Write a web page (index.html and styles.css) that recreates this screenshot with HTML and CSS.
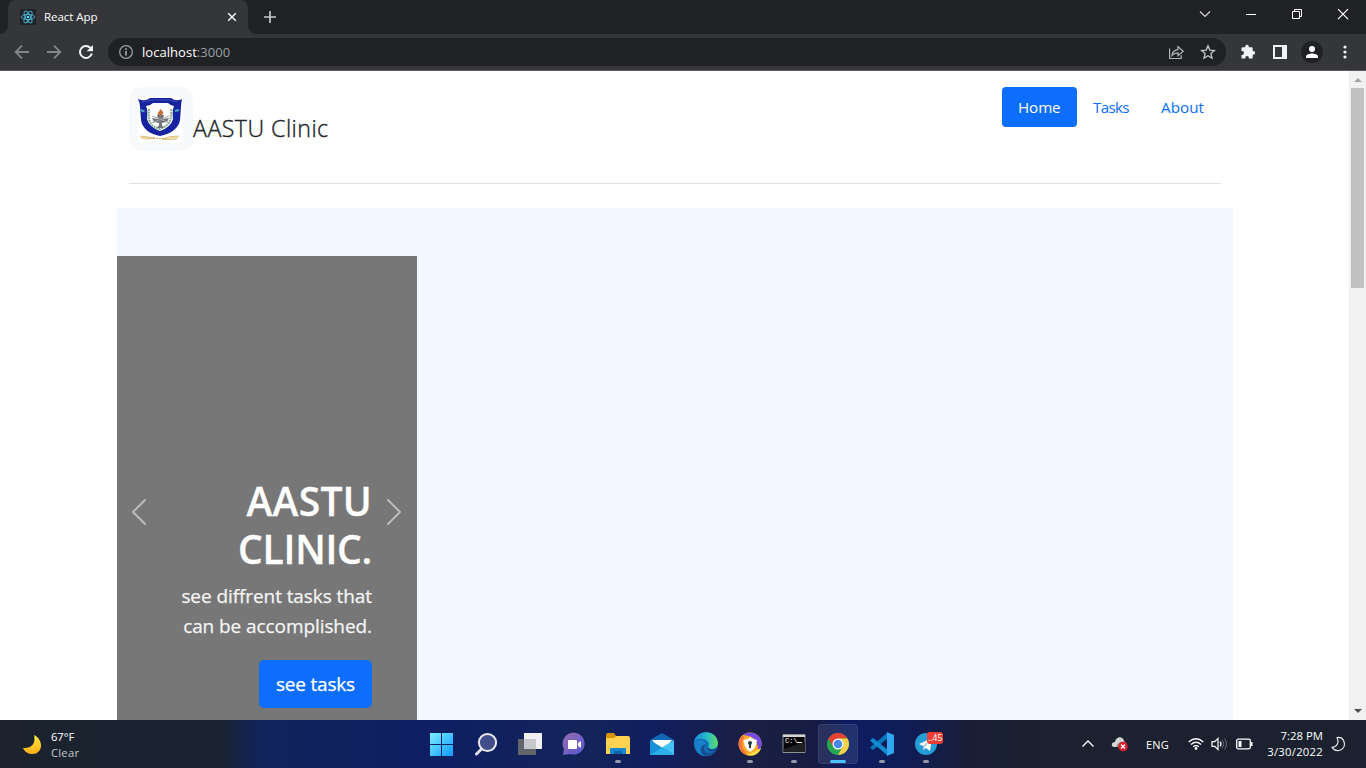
FILE: index.html
```html
<!DOCTYPE html>
<html lang="en">
<head>
<meta charset="utf-8">
<title>React App</title>
<link rel="stylesheet" href="styles.css">
</head>
<body>
<div class="screen">
  <div class="tabstrip">
    <div class="tab">
      <svg class="favicon" width="16" height="16" viewBox="0 0 16 16"><rect width="16" height="16" rx="1.5" fill="#20232a"/><g fill="none" stroke="#4fb3cf" stroke-width=".9"><ellipse cx="8" cy="8" rx="6.6" ry="2.6"/><ellipse cx="8" cy="8" rx="6.6" ry="2.6" transform="rotate(60 8 8)"/><ellipse cx="8" cy="8" rx="6.6" ry="2.6" transform="rotate(120 8 8)"/></g><circle cx="8" cy="8" r="1.3" fill="#61dafb"/></svg>
      <span class="tab-title">React App</span>
      <svg class="tab-close" width="16" height="16" viewBox="0 0 16 16"><path d="M4.2 4.2l7.6 7.6M11.8 4.2l-7.6 7.6" stroke="#f1f3f4" stroke-width="1.5"/></svg>
    </div>
    <svg class="new-tab" width="16" height="16" viewBox="0 0 16 16"><path d="M8 2v12M2 8h12" stroke="#c6c7c9" stroke-width="1.7"/></svg>
    <div class="window-buttons">
      <svg width="46" height="28" viewBox="0 0 46 28"><path d="M18 11.5l5 5 5-5" fill="none" stroke="#dedede" stroke-width="1.1"/></svg>
      <svg width="46" height="28" viewBox="0 0 46 28"><path d="M18 14.5h10" stroke="#fff" stroke-width="1"/></svg>
      <svg width="46" height="28" viewBox="0 0 46 28"><path d="M18.500 11.500h7v7h-7zM20.500 11.500v-2h7v7h-2" fill="none" stroke="#fff"/></svg>
      <svg width="46" height="28" viewBox="0 0 46 28"><path d="M18 9.200l10 10M28 9.200l-10 10" stroke="#fff" stroke-width="1.200"/></svg>
    </div>
  </div>
  <div class="toolbar">
    <svg width="16" height="16" viewBox="0 0 16 16"><path d="M15 8H2M8 1.700L1.700 8 8 14.300" fill="none" stroke="#85868a" stroke-width="1.800"/></svg>
    <svg width="16" height="16" viewBox="0 0 16 16"><path d="M1 8h13M8 1.700L14.300 8 8 14.300" fill="none" stroke="#85868a" stroke-width="1.800"/></svg>
    <svg width="16" height="16" viewBox="0 0 16 16"><path d="M13.800 9.500A6 6 0 1 1 12.300 3.800L13.500 5" fill="none" stroke="#f1f3f4" stroke-width="2"/><path d="M15 1v6.300H8.700z" fill="#f1f3f4"/></svg>
    <div class="omnibox">
      <svg width="16" height="16" viewBox="0 0 16 16"><circle cx="8" cy="8" r="6.300" fill="none" stroke="#9aa0a6" stroke-width="1.300"/><path d="M8 7v4.500M8 4.300V6" stroke="#b4b7ba" stroke-width="1.500"/></svg>
      <span class="url">localhost<span class="port">:3000</span></span>
      <svg class="share" width="17" height="16" viewBox="0 0 17 16"><path d="M1.600 4.500v10h11.600v-3.300M4 11.300c.6-3.700 2.800-5.400 6-5.600V2.600l5.200 4.600-5.200 4.400V8.900c-2.800 0-4.500.7-6 2.400z" fill="none" stroke="#b4b6b9" stroke-width="1.200"/></svg>
      <svg class="star" width="16" height="16" viewBox="0 0 16 16"><path d="M8 1.800l1.800 4.300 4.700.4-3.600 3.100 1.100 4.600L8 11.700l-4 2.500 1.100-4.600-3.600-3.100 4.700-.4z" fill="none" stroke="#c6c8ca" stroke-width="1.300"/></svg>
    </div>
    <svg class="puzzle" width="16" height="16" viewBox="0 0 16 16"><path d="M1.500 4.500q0-1.200 1.200-1.200h2.500V2.500a1.800 1.800 0 0 1 3.600 0v.8h2.700q1.200 0 1.200 1.200v2.600h.6a1.800 1.800 0 0 1 0 3.600h-.6v2.700q0 1.200-1.200 1.200H8.900v-.7a1.800 1.800 0 0 0-3.600 0v.7H2.700q-1.200 0-1.200-1.200v-2.500h.6a1.900 1.900 0 0 0 0-3.800h-.6z" fill="#f1f3f4"/></svg>
    <svg class="side" width="14" height="14" viewBox="0 0 14 14"><path d="M0 0h14v14H0zM2 2v10h7V2z" fill="#f1f3f4" fill-rule="evenodd"/></svg>
    <svg class="profile" width="22" height="22" viewBox="0 0 22 22"><circle cx="11" cy="11" r="11" fill="#202124"/><circle cx="11" cy="8" r="3" fill="#fff"/><path d="M5 17v-1.500c0-2 3.500-3 6-3s6 1 6 3V17z" fill="#fff"/></svg>
    <svg class="dots" width="4" height="14" viewBox="0 0 4 14"><g fill="#f1f3f4"><circle cx="2" cy="2" r="1.600"/><circle cx="2" cy="7" r="1.600"/><circle cx="2" cy="12" r="1.600"/></g></svg>
  </div>
  <div class="viewport">
    <main class="page">
      <header class="site-header">
        <a class="brand">
          <svg width="64" height="64" viewBox="0 0 64 64"><rect width="64" height="64" rx="13" fill="#f8f9fa"/><rect x="9" y="10" width="45" height="45" fill="#fff"/>
            <path d="M9 12q7 3 12-1h21q5 4 11 1-1 4-1 8l-1 13c-1 8-9 14-20 16-11-2-18-8-19-16l-1-13q0-4-2-8z" fill="#1823a0"/>
            <path d="M17 19q4 0 7-3h15q3 3 6 3-2 5-1 13-2 8-13 12-11-4-13-12 1-8-1-13z" fill="#fff"/>
            <path d="M20 22c-1 13 1 17 11 20 10-4 12-10 11-20" fill="none" stroke="#82ab8c" stroke-width="2" stroke-dasharray="2 .7"/><path d="M11.500 23l4 1.500M46 24l4-1" stroke="#51a7c3" stroke-width="2"/><path d="M13 15l6-1 4-1h18l7 2" stroke="#525fc0" stroke-width="1" fill="none" stroke-dasharray="1.500 1"/>
            <path d="M23 31l6 1-1-4h7l-1 4 6-1-2 4-5 1v2l2 3h-7l2-3v-2l-5-1z" fill="#73777c"/><path d="M23 29l18 7M40 29l-17 7" stroke="#a2a8aa" stroke-width="1"/><path d="M29 28c-1-3 2-3 2-6 4 3 4 4 2 6z" fill="#c36d35"/>
            <path d="M11 49q9 1 15 2-7 2-14 0M50 49q-10 0-17 3 9 1 15 0" fill="#f6e2af" stroke="#d5b36d" stroke-width=".8"/><path d="M24 51l13 1" stroke="#d69b61" stroke-dasharray="2 1"/></svg>
          <span class="brand-name">AASTU Clinic</span>
        </a>
        <nav class="nav"><a class="nav-link active">Home</a><a class="nav-link tasks">Tasks</a><a class="nav-link about">About</a></nav>
      </header>
      <section class="hero">
        <div class="carousel">
          <div class="control"><svg width="32" height="32" viewBox="0 0 16 16"><path d="M11 2L5 8l6 6" fill="none" stroke="#bbb" stroke-linecap="round" stroke-linejoin="round"/></svg></div>
          <div class="caption">
            <h1><span class="h-one">AASTU</span><br><span class="h-two">CLINIC.</span></h1>
            <p><span class="p-one">see diffrent tasks that</span><br><span class="p-two">can be accomplished.</span></p>
            <a class="button">see tasks</a>
          </div>
          <div class="control"><svg width="32" height="32" viewBox="0 0 16 16"><path d="M5 2l6 6-6 6" fill="none" stroke="#bbb" stroke-linecap="round" stroke-linejoin="round"/></svg></div>
        </div>
      </section>
    </main>
    <div class="scrollbar">
      <svg width="17" height="17" viewBox="0 0 17 17"><path d="M5 11l4-4 4 4z" fill="#a3a3a3"/></svg>
      <div class="thumb"></div>
      <svg class="down" width="17" height="17" viewBox="0 0 17 17"><path d="M5 6h8l-4 4z" fill="#505050"/></svg>
    </div>
  </div>
  <footer class="taskbar">
    <div class="weather">
      <svg width="20" height="20" viewBox="0 0 20 20"><defs><linearGradient id="moon" x2="0" y2="1"><stop stop-color="#ffed48"/><stop offset="1" stop-color="#ffad12"/></linearGradient></defs><path d="M12 1c10 5 9 18-1 19-5 0-8-2-10-6 9 1 13-5 11-13z" fill="url(#moon)"/></svg>
      <div><div class="temp">67°F</div><div class="cond">Clear</div></div>
    </div>
    <div class="apps">
      <div class="app"><svg width="24" height="24" viewBox="0 0 24 24"><defs><linearGradient id="win" x2="1" y2="1" gradientUnits="userSpaceOnUse" gradientTransform="scale(24)"><stop stop-color="#80f0ff"/><stop offset="1" stop-color="#0b98ff"/></linearGradient></defs><path d="M0 1h11v11H0zM12 1h11v11H12zM0 13h11v11H0zM12 13h11v11H12z" fill="url(#win)"/></svg></div>
      <div class="app"><svg width="24" height="24" viewBox="0 0 24 24"><path d="M8.500 16l-6 6" stroke="#e1e1e5" stroke-width="3" stroke-linecap="round"/><circle cx="13.500" cy="10.500" r="8.600" fill="#414d8d" stroke="#e9e9ec" stroke-width="2"/></svg></div>
      <div class="app"><svg width="24" height="24" viewBox="0 0 24 24"><path d="M0 7h18v16H0z" fill="#62666b"/><path d="M6 1h18v16H6z" fill="#f0f0f2"/><path d="M6 7h12v10H6z" fill="#c7c8cb"/></svg></div>
      <div class="app"><svg width="24" height="24" viewBox="0 0 24 24"><defs><linearGradient id="chat" x2="1" y2="1"><stop stop-color="#9c6bad"/><stop offset="1" stop-color="#5057d2"/></linearGradient></defs><path d="M1 23l1-6A11 11 0 1 1 8 22z" fill="url(#chat)"/><rect x="6" y="8" width="9" height="9" rx="1" fill="#fff"/><path d="M16 11l3-2v7l-3-2z" fill="#fff"/></svg></div>
      <div class="app open"><svg width="24" height="24" viewBox="0 0 24 24"><path d="M0 3q0-2 2-2h6l2 3v4H0z" fill="#d99200"/><path d="M0 6h8l2-2h12q2 0 2 2v16H0z" fill="#ffd252"/><path d="M4 22v-5q0-1 1-1h14q1 0 1 1v5z" fill="#1687d2"/><path d="M8 19h8v3H8z" fill="#0b65a7"/></svg></div>
      <div class="app"><svg width="24" height="24" viewBox="0 0 24 24"><path d="M0 8l12-7 12 7v5H0z" fill="#1267b4"/><path d="M2 8h20l-6 8H8z" fill="#fff"/><path d="M0 8l24 15H0z" fill="#1690d8"/><path d="M24 8v15L12 15.500z" fill="#42c3f4"/><path d="M0 23l12-7.500L24 23z" fill="#2aade8"/></svg></div>
      <div class="app"><svg width="24" height="24" viewBox="0 0 24 24"><defs><linearGradient id="edge"><stop stop-color="#178bd2"/><stop offset=".55" stop-color="#28bdc9"/><stop offset="1" stop-color="#61db61"/></linearGradient></defs><circle cx="12" cy="12" r="12" fill="#126db8"/><path d="M0 10C2-2 22-4 24 11c0 7-9 7-10 4 4-7-8-12-14-5z" fill="url(#edge)"/><path d="M0 11c4-5 12-3 12 1-6 5 2 12 10 6-4 7-14 8-19 2z" fill="#1683ca"/><path d="M12 12c-6 5 2 13 10 6-3 5-9 7-13 5-4-4-3-10 3-11z" fill="#164f93"/><path d="M14 15c1 4 8 4 10 0l-2 3c-5 2-9 0-8-3z" fill="#122359"/></svg></div>
      <div class="app open"><svg width="24" height="24" viewBox="0 0 24 24"><circle cx="12" cy="12" r="11.500" fill="#ffac25"/><path d="M5 3C13-3 24 3 23.500 12c0 3-1 5-3 7-1-8-2-15-15.500-16z" fill="#744de0"/><path d="M5 3C-2 9 0 20 9 23 5 17 2 12 6 6z" fill="#fb7141"/><path d="M9 23c7 2 12-1 14-7-3 2-8 4-14 7z" fill="#ffe048"/><path d="M5.500 8q5-1 6.500-3 2 2 7 3-1 9-7 12-6-4-6.500-12z" fill="#fff"/><circle cx="12" cy="11" r="2" fill="#29394c"/><path d="M11 11h2v5h-2z" fill="#29394c"/></svg></div>
      <div class="app open"><svg width="24" height="24" viewBox="0 0 24 24"><path d="M1 2.500h22v18H1z" fill="#050505" stroke="#8e9094"/><path d="M1 3h22v2H1z" fill="#d4d5d7"/><path d="M1.500 17L23 10v10H1.500z" fill="#202124"/><text x="3" y="11" class="cmd">C:\</text><path d="M15 10.500h5" stroke="#fff"/></svg></div>
      <div class="app open current"><svg width="24" height="24" viewBox="0 0 24 24"><circle cx="12" cy="12" r="11" fill="#26a651"/><path d="M2.500 6.500A11 11 0 0 1 21.500 6.500H12L7.200 14.700z" fill="#e84132"/><path d="M21.500 6.500A11 11 0 0 1 12 23l4.800-8.200V9L12 6.500z" fill="#fcd049"/><circle cx="12" cy="12" r="5.500" fill="#fff"/><circle cx="12" cy="12" r="4.300" fill="#4587ee"/></svg></div>
      <div class="app open"><svg width="24" height="24" viewBox="0 0 24 24"><path d="M18 0v6L3 18l-3-2.500z" fill="#0876ba"/><path d="M18 24v-6L3 6 0 8.500z" fill="#138bd0"/><path d="M17 0l7 3v18l-7 3z" fill="#2fa8ef"/></svg></div>
      <div class="app open telegram"><svg width="24" height="24" viewBox="0 0 24 24"><circle cx="12" cy="12" r="11" fill="#249cd6"/><path d="M5 12l13-6-2 13-4-3-3 2v-4z" fill="#fff"/><path d="M9 14l7-6-5 7-2 3z" fill="#a7c8dc"/></svg><span class="badge">..45</span></div>
    </div>
    <div class="tray">
      <svg class="chevron" width="14" height="10" viewBox="0 0 14 10"><path d="M1.500 7.500L7 2l5.500 5.500" fill="none" stroke="#fff" stroke-width="1.300"/></svg>
      <svg class="cloud" width="18" height="16" viewBox="0 0 18 16"><path d="M5 11H3c-3 0-3-5 1-5 1-6 8-6 9-1l3 3v3z" fill="#d5d5d5"/><path d="M5 11c2-5 6-7 10-3v3z" fill="#96999c"/><circle cx="12" cy="10.500" r="4.800" fill="#d71e2b"/><path d="M10 8.500l4 4m0-4l-4 4" stroke="#fff" stroke-width="1.300"/></svg>
      <span class="lang">ENG</span>
      <svg class="wifi" width="16" height="14" viewBox="0 0 16 14"><g fill="none" stroke="#fff" stroke-width="1.200"><path d="M.7 5Q8-1.500 15.300 5M3 7.500q5-4.500 10 0M5.200 9.800q2.800-2.500 5.600 0"/></g><circle cx="8" cy="11.500" r="1.400" fill="#fff"/></svg>
      <svg class="sound" width="17" height="14" viewBox="0 0 17 14"><path d="M1 4.700h2.700L7 1.500v11L3.700 9.300H1z" fill="none" stroke="#fff" stroke-width="1.200"/><path d="M9 4.700q2 2.300 0 4.600" fill="none" stroke="#fff" stroke-width="1.200"/><path d="M11.300 3q3 4 0 8M13.500 1.500q4 5.500 0 11" fill="none" stroke="#666b75"/></svg>
      <svg class="battery" width="17" height="12" viewBox="0 0 17 12"><rect x=".7" y="1.200" width="13.600" height="9.600" rx="1.500" fill="none" stroke="#fff" stroke-width="1.300"/><path d="M2.500 3h3v6h-3zM15 4h1.500v4H15z" fill="#fff"/></svg>
      <div class="clock"><div class="time">7:28 PM</div><div class="date">3/30/2022</div></div>
      <svg class="focus" width="15" height="16" viewBox="0 0 15 16"><path d="M6 1.500c8-1 10 10 3.500 12.500-3 1.200-6.500 0-8.500-2.700 5-.3 7.500-4.500 5-9.800z" fill="none" stroke="#e6e7e9" stroke-width="1.200" stroke-linejoin="round"/></svg>
    </div>
  </footer>
</div>
</body>
</html>
```
FILE: styles.css
```css
* { box-sizing: border-box; }
body { margin: 0; font-family: "Open Sans", "Noto Sans", sans-serif; overflow: hidden; }
svg { display: block; flex: none; }
span, a { white-space: nowrap; }
.screen { width: 1366px; height: 768px; display: flex; flex-direction: column; overflow: hidden; }
.tabstrip { height: 34px; background: #202124; display: flex; align-items: flex-start; padding-left: 8px; }
.tab { width: 240px; height: 34px; padding: 0 8px 0 12px; background: #35363a; border-radius: 8px 8px 0 0; display: flex; align-items: center; position: relative; }
.tab::before, .tab::after { content: ""; position: absolute; bottom: 0; width: 8px; height: 8px; }
.tab::before { left: -8px; background: radial-gradient(circle at 0 0, transparent 7.5px, #35363a 8px); }
.tab::after { right: -8px; background: radial-gradient(circle at 100% 0, transparent 7.5px, #35363a 8px); }
.tab-title { font-size: 11.5px; letter-spacing: -.04px; color: #fff; margin: -2px 0 0 8px; }
.tab-close { margin-left: auto; }
.new-tab { margin: 9px 0 0 14px; }
.window-buttons { margin-left: auto; display: flex; }
.toolbar { height: 37px; background: #35363a; border-bottom: 1px solid #5b5a60; display: flex; align-items: center; padding: 0 19px 0 14px; }
.toolbar > svg:nth-child(-n+3) { margin-right: 16px; }
.toolbar > svg:nth-child(3) { margin-right: 14px; }
.omnibox { width: 1118px; height: 28px; border-radius: 14px; background: #202124; display: flex; align-items: center; padding: 0 10px; }
.url { color: #fff; font-size: 13px; letter-spacing: .04px; margin-left: 8px; }
.port { color: #9aa0a6; }
.share { margin-left: auto; }
.star { margin-left: 15px; }
.puzzle { margin-left: 14px; }
.side { margin-left: 17px; }
.profile { margin-left: 14px; }
.dots { margin-left: auto; }
.viewport { height: 649px; display: flex; background: #fff; overflow: hidden; }
.page { width: 1116px; margin-left: 117px; }
.site-header { margin: 0 12px 24px; height: 113px; padding-top: 16px; border-bottom: 1px solid #dee2e6; display: flex; justify-content: space-between; align-items: flex-start; }
.brand { display: flex; color: #212529; }
.brand-name { font-size: 23.2px; line-height: 36px; margin-top: 23px; font-weight: 300; -webkit-text-stroke: .35px #212529; letter-spacing: .45px; }
.nav { display: flex; }
.nav-link { height: 40px; line-height: 41px; padding: 0 16px; border-radius: 4px; color: #0d6efd; font-size: 15.2px; letter-spacing: -.1px; width: 75px; }
.nav-link.tasks { width: 68px; letter-spacing: -.7px; }
.nav-link.about { width: 76px; letter-spacing: .05px; }
.nav-link.active { background: #0d6efd; color: #fff; }
.hero { background: #f0f7ff; height: 560px; padding-top: 48px; }
.carousel { width: 300px; height: 512px; background: #777; display: flex; align-items: center; color: #fff; }
.control { width: 45px; display: flex; justify-content: center; padding-right: 2px; }
.caption { width: 210px; align-self: flex-start; padding-top: 221px; text-align: right; white-space: nowrap; }
h1 { font-size: 39px; line-height: 48px; font-weight: 600; margin: 0 0 8px; -webkit-text-stroke: .3px #fff; }
.h-one { letter-spacing: .3px; }
.h-two { letter-spacing: -.25px; }
p { font-size: 19px; line-height: 30px; margin: 0 0 19px; color: #f5f5f5; -webkit-text-stroke: .25px #f5f5f5; letter-spacing: -.08px; }
.button { display: inline-block; width: 113px; height: 48px; line-height: 49px; border-radius: 5px; background: #0d6efd; font-size: 19px; text-align: center; letter-spacing: -.2px; -webkit-text-stroke: .25px #fff; }
.scrollbar { width: 17px; margin-left: auto; background: #f1f1f1; display: flex; flex-direction: column; }
.thumb { width: 13px; height: 200px; margin-left: 2px; background: #c1c1c1; }
.down { margin-top: auto; }
.taskbar { height: 48px; color: #fff; background: linear-gradient(90deg, #1c232f 0, #1a2230 220px, #11245b 260px, #0e1f63 430px, #14245a 590px, #101e60 650px, #1b1f43 750px, #171c42 810px, #0d1d62 850px, #101d55 910px, #191e36 970px, #1b212f 1040px, #1b212e); display: flex; align-items: center; }
.weather { width: 420px; padding-left: 22px; display: flex; align-items: center; gap: 9px; font-size: 11.3px; line-height: 16px; }
.weather > div { padding-top: 2px; }
.temp { letter-spacing: -.1px; }
.cond { color: #c4c7cc; letter-spacing: .2px; }
.apps { display: flex; width: 529px; }
.app { width: 44px; height: 48px; display: flex; justify-content: center; padding-top: 12px; position: relative; flex: none; }
.app::before { content: ""; position: absolute; inset: 4px 2px; border-radius: 4px; }
.app svg { position: relative; }
.current::before { background: #ffffff17; border: 1px solid #ffffff12; }
.open::after { content: ""; position: absolute; bottom: 5px; width: 6px; height: 3px; border-radius: 2px; background: #9598ab; }
.current::after { width: 16px; background: #4cc2ff; }
.cmd { font: 7px "Liberation Mono", monospace; fill: #fff; }
.badge { position: absolute; left: 23px; top: 12px; width: 16px; height: 12px; border-radius: 3px; background: #f23c34; font-size: 9px; line-height: 12px; text-align: center; letter-spacing: -.2px; }
.tray { flex: 1; display: flex; align-items: center; padding-left: 132px; }
.cloud { margin-left: 16px; }
.lang { font-size: 11px; margin-left: 17px; width: 24px; letter-spacing: .2px; }
.wifi { margin-left: 18px; }
.sound { margin-left: 7px; }
.battery { margin-left: 8px; }
.clock { width: 70px; text-align: right; font-size: 11.300px; line-height: 16px; white-space: nowrap; }
.time { letter-spacing: .05px; }
.date { letter-spacing: .25px; }
.focus { margin-left: 8px; }
```
